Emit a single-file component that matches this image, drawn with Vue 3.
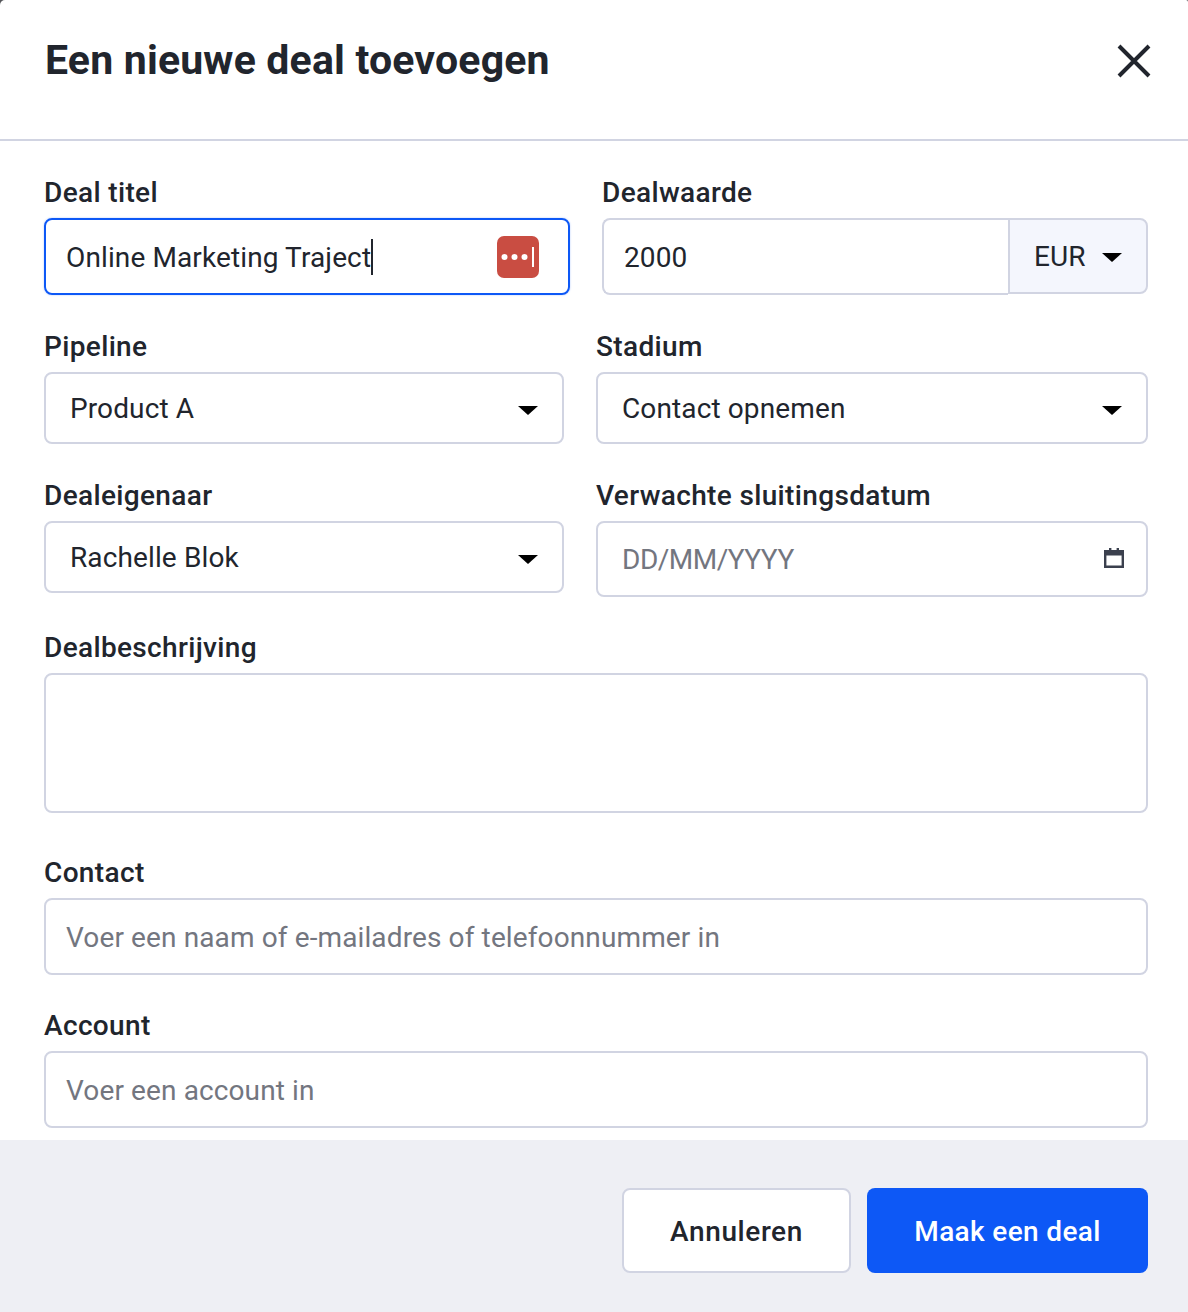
<template>
  <div class="modal">
    <header class="modal-head">
      <h1>Een nieuwe deal toevoegen</h1>
      <button class="close" aria-label="Sluiten">
        <svg width="36" height="36" viewBox="0 0 36 36">
          <path d="M3 3 L33 33 M33 3 L3 33" stroke="#21252d" stroke-width="4" fill="none" />
        </svg>
      </button>
    </header>

    <div class="modal-body">
      <div class="row row-first">
        <div class="field title-field">
          <label>Deal titel</label>
          <div class="input focused">
            <span class="value">{{ dealTitle }}</span><span class="caret"></span>
            <span class="lastpass">
              <svg width="42" height="42" viewBox="0 0 42 42">
                <rect width="42" height="42" rx="7" fill="#c94d42" />
                <circle cx="7.500" cy="21" r="3" fill="#fff" />
                <circle cx="17.500" cy="21" r="3" fill="#fff" />
                <circle cx="27.500" cy="21" r="3" fill="#fff" />
                <rect x="35" y="11" width="2" height="20" fill="#fff" />
              </svg>
            </span>
          </div>
        </div>
        <div class="field value-field">
          <label>Dealwaarde</label>
          <div class="money">
            <div class="input amount"><span class="value">2000</span></div>
            <div class="currency">
              <span>EUR</span>
              <span class="arrow"></span>
            </div>
          </div>
        </div>
      </div>

      <div class="row">
        <div class="field left-field">
          <label>Pipeline</label>
          <div class="select"><span>Product A</span><span class="arrow"></span></div>
        </div>
        <div class="field right-field">
          <label>Stadium</label>
          <div class="select"><span>Contact opnemen</span><span class="arrow"></span></div>
        </div>
      </div>

      <div class="row">
        <div class="field left-field">
          <label>Dealeigenaar</label>
          <div class="select"><span>Rachelle Blok</span><span class="arrow"></span></div>
        </div>
        <div class="field right-field">
          <label>Verwachte sluitingsdatum</label>
          <div class="input date">
            <span class="placeholder">DD/MM/YYYY</span>
            <svg width="20" height="20" viewBox="0 0 20 20">
              <path d="M5 0h2.400v2h5.200V0H15v2h5v18H0V2h5z M2.400 7.500v10h15.200v-10z" fill="#3b404e" fill-rule="evenodd" />
            </svg>
          </div>
        </div>
      </div>

      <div class="field desc-field">
        <label>Dealbeschrijving</label>
        <div class="textarea"></div>
      </div>

      <div class="field">
        <label>Contact</label>
        <div class="input"><span class="placeholder">Voer een naam of e-mailadres of telefoonnummer in</span></div>
      </div>

      <div class="field">
        <label>Account</label>
        <div class="input"><span class="placeholder">Voer een account in</span></div>
      </div>
    </div>

    <footer class="modal-foot">
      <button class="btn cancel">Annuleren</button>
      <button class="btn primary">Maak een deal</button>
    </footer>
  </div>
</template>

<script setup>
import { ref } from "vue";

const dealTitle = ref("Online Marketing Traject");
</script>

<style>
body {
  background: #55565a;
}
</style>

<style scoped>
.modal {
  width: 1188px;
  height: 1312px;
  background: #fff;
  border-radius: 5px 2px 0 0;
  color: #21252d;
  font-family: Roboto, "Noto Sans", sans-serif;
  font-size: 28px;
  letter-spacing: 0.12px;
  display: flex;
  flex-direction: column;
  overflow: hidden;
}
.modal-head {
  height: 139px;
  flex: none;
  border-bottom: 2px solid #d1d4e2;
  box-sizing: content-box;
  padding: 0 36px 0 45px;
  display: flex;
  justify-content: space-between;
  align-items: flex-start;
}
h1 {
  margin: 34px 0 0;
  font-size: 41px;
  line-height: 52px;
  font-weight: 700;
  letter-spacing: 0.18px;
}
.close {
  margin-top: 43px;
  padding: 0;
  width: 36px;
  height: 36px;
  border: none;
  background: none;
}
.modal-body {
  flex: 1;
  min-height: 0;
  padding: 37px 40px 0 44px;
}
.row {
  display: flex;
  gap: 32px;
}
.field {
  margin-bottom: 36px;
}
.row-first .field,
.row:nth-child(2) .field {
  margin-bottom: 37px;
}
.title-field { width: 526px; }
.value-field { width: 546px; }
.left-field { width: 520px; }
.right-field { width: 552px; }
.desc-field { margin-bottom: 45px; }
label {
  display: block;
  height: 28px;
  line-height: 30px;
  margin-bottom: 12px;
  font-size: 28px;
  font-weight: 500;
  letter-spacing: 0.35px;
}
.input {
  height: 77px;
  box-sizing: border-box;
  border: 2px solid #d1d4e2;
  border-radius: 8px;
  padding: 2px 20px 0;
  display: flex;
  align-items: center;
  position: relative;
}
.input.focused {
  border-color: #0d58f6;
  box-shadow: 0 0 2px rgba(13, 88, 246, 0.35);
}
.caret {
  width: 2px;
  height: 36px;
  margin-top: -2px;
  background: #21252d;
}
.lastpass {
  position: absolute;
  right: 29px;
  top: 16px;
  height: 42px;
}
.placeholder {
  color: #73767f;
}
.money {
  display: flex;
}
.amount {
  flex: 1;
  border-radius: 8px 0 0 8px;
  border-right: none;
}
.currency {
  width: 140px;
  height: 76px;
  box-sizing: border-box;
  border: 2px solid #d1d4e2;
  border-radius: 0 8px 8px 0;
  background: #f4f6fd;
  display: flex;
  align-items: center;
  padding-left: 24px;
  gap: 16px;
}
.currency .arrow {
  margin-top: 3px;
}
.arrow {
  width: 0;
  height: 0;
  border-left: 10px solid transparent;
  border-right: 10px solid transparent;
  border-top: 9px solid #000;
}
.select {
  height: 72px;
  box-sizing: border-box;
  border: 2px solid #d1d4e2;
  border-radius: 8px;
  padding: 0 24px;
  display: flex;
  align-items: center;
  justify-content: space-between;
}
.select .arrow {
  margin-top: 4px;
}
.date {
  height: 76px;
  justify-content: space-between;
  padding: 0 22px 0 24px;
}
.date .placeholder {
  letter-spacing: -0.5px;
}
.date svg {
  margin-top: -3px;
}
.textarea {
  height: 140px;
  box-sizing: border-box;
  border: 2px solid #d1d4e2;
  border-radius: 8px;
}
.modal-foot {
  height: 172px;
  flex: none;
  background: #eeeff4;
  padding: 48px 40px 0 0;
  box-sizing: border-box;
  display: flex;
  justify-content: flex-end;
  gap: 16px;
}
.btn {
  height: 85px;
  padding: 2px 0 0;
  border-radius: 8px;
  font-family: inherit;
  font-size: 28px;
  font-weight: 500;
}
.cancel {
  width: 229px;
  background: #fff;
  border: 2px solid #d1d4e2;
  color: #21252d;
  letter-spacing: 0.6px;
}
.primary {
  width: 281px;
  background: #0d58f6;
  border: none;
  color: #fff;
  letter-spacing: 0.35px;
}
</style>
